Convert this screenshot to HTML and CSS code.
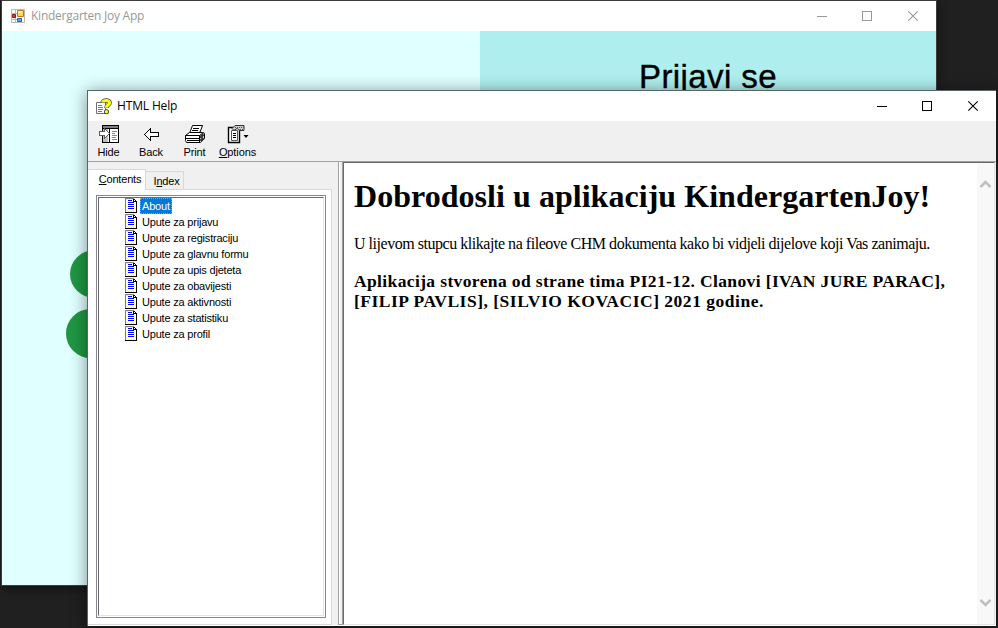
FILE: index.html
```html
<!DOCTYPE html>
<html lang="hr">
<head>
<meta charset="utf-8">
<title>HTML Help</title>
<link rel="stylesheet" href="styles.css">
</head>
<body>
<svg class="defs" width="0" height="0" aria-hidden="true">
  <symbol id="page" viewBox="0 0 12 15">
    <rect x="1" y="1" width="10" height="13" fill="#fff"/>
    <path fill="#ffff3c" d="M1 1h2v1H1zM4 1h1v1H4zM6 1h2v1H6zM1 3h1v1H1zM2 5h1v1H2zM1 7h1v2H1zM2 9h1v1H2zM1 11h1v1H1zM2 12h2v1H2zM5 13h2v1H5zM8 12h1v2H8zM9 5h1v1H9zM9 7h1v1H9zM9 9h1v2H9z"/>
    <rect width="9" height="1" fill="#808080"/>
    <rect width="1" height="14" fill="#808080"/>
    <path fill="#000" d="M9 1h1v1H9zM8 1h1v2H8zM8 3h3v1H8zM10 2h1v1h-1z"/>
    <rect x="11" y="3" width="1" height="12" fill="#000"/>
    <rect y="14" width="12" height="1" fill="#000"/>
    <g fill="#0000ff">
      <rect x="3" y="2" width="4" height="1"/>
      <rect x="3" y="4" width="6" height="1"/>
      <rect x="3" y="6" width="6" height="1"/>
      <rect x="3" y="8" width="6" height="1"/>
      <rect x="3" y="10" width="6" height="1"/>
    </g>
  </symbol>
  <symbol id="controls" viewBox="0 0 108 12">
    <g fill="none" stroke="currentColor" shape-rendering="crispEdges">
      <path d="M0 6.5h10"/><path d="M45.5 1.5h9v9h-9z"/>
    </g>
    <path fill="none" stroke="currentColor" stroke-width="1.1" d="M91.3 1.300l9.400 9.400M100.700 1.300l-9.400 9.400"/>
  </symbol>
</svg>

<div class="window app">
  <header class="titlebar">
    <svg class="app-icon" width="14" height="14" viewBox="0 0 14 14">
      <path fill="#fff" stroke="#b8b8b8" d="M.5.5h13v13H.5zM.5 4.500h6M4.500 .5v13M.5 10.500h6"/>
      <path fill="#ffd84e" stroke="#b87a12" d="M6.500 1.500h6v6h-6z"/><path fill="#fff0a0" d="M7 2h4v2H7z"/>
      <path fill="#d83c2c" stroke="#8f1616" d="M1.500 5.500h3v3h-3z"/>
      <path fill="#6aa0f0" stroke="#2e5cb8" d="M6.500 9.500h4v3h-4z"/>
    </svg>
    <span class="title">Kindergarten Joy App</span>
    <svg class="controls" width="108" height="12"><use href="#controls"/></svg>
  </header>
  <div class="app-body">
    <div class="welcome">
      <svg class="clover" width="90" height="120" viewBox="0 0 90 120">
        <ellipse cx="29" cy="24" rx="25" ry="24"/><circle cx="24.500" cy="83.500" r="24.500"/>
      </svg>
    </div>
    <div class="login">Prijavi se</div>
  </div>
</div>

<div class="window help">
  <header class="titlebar">
    <svg class="help-icon" width="16" height="17" viewBox="0 0 16 17">
      <path fill="#fff" stroke="#707070" d="M.5 4.500h9v11h-9z"/>
      <path stroke="#777" d="M2 7.500h4M2 9.500h5M2 11.500h5M2 13.500h4"/>
      <path fill="none" stroke="#444" stroke-width="4.600" d="M7 5V3.800Q8 2.500 10 2.500q3.500 0 3.500 2.200 0 1.500-1.500 2.500Q10.500 8 10.500 10"/>
      <circle cx="10.500" cy="13.700" r="2.500" fill="#333"/>
      <path fill="none" stroke="#ff0" stroke-width="3.200" d="M7 4.600V3.800Q8 2.500 10 2.500q3.500 0 3.500 2.200 0 1.500-1.500 2.500Q10.500 8 10.500 9.700"/>
      <circle cx="10.500" cy="13.700" r="1.700" fill="#ff0"/>
    </svg>
    <span class="title">HTML Help</span>
    <svg class="controls" width="108" height="12"><use href="#controls"/></svg>
  </header>

  <nav class="toolbar">
    <div class="tool hide">
      <svg width="22" height="20" viewBox="0 0 22 20" shape-rendering="crispEdges">
        <path fill="#fff" stroke="#000" d="M4.500 .5h16v17h-16z"/>
        <path fill="#808080" d="M5 1h15v2H5z"/><path fill="#c0c0c0" d="M5 4h5v13H5z"/>
        <path stroke="#000" d="M4 3.500h17M11.500 3v15"/>
        <path stroke="#888" d="M14 6.500h5M14 8.500h3M14 10.500h5M14 12.500h4M14 14.500h5"/>
        <path fill="#fff" stroke="#606060" d="M1.500 6.500h5v-3l5 5-5 5v-3h-5z"/>
      </svg><span>Hide</span>
    </div>
    <div class="tool back">
      <svg width="22" height="20" viewBox="0 0 22 20"><path fill="#fff" stroke="#000" d="M4.500 9.500l6-6v4h8v4h-8v4z" shape-rendering="crispEdges"/></svg><span>Back</span>
    </div>
    <div class="tool print">
      <svg width="22" height="20" viewBox="0 0 22 20">
        <path fill="#fff" stroke="#000" d="M5.500 8.500l3-8h10l-3 8"/>
        <path fill="#fff" stroke="#000" d="M1.500 10.500l4-3h13l2 1v5l-4 4H2.500l-1-2z"/>
        <path fill="none" stroke="#000" d="M1.500 10.500h14l4-3M2 13.500h13.500l5-4M3 15.500h12M15.500 10.500v7M9 3.500h6M8 5.500h6"/>
        <path stroke="#333" stroke-width="2.500" d="M16.500 12l3-2.500M16.500 16l3-3"/>
      </svg><span>Print</span>
    </div>
    <div class="tool options">
      <svg width="22" height="20" viewBox="0 0 22 20">
        <path fill="#fff" stroke="#000" stroke-width="1.400" d="M1.500 2.500h11v15h-11z"/><path fill="#fff" stroke="#555" d="M4.500 5.500h6v10h-6z"/>
        <path stroke="#000" d="M6 8.500h3M6 10.500h3M6 12.500h3"/>
        <path fill="#ccc" stroke="#333" d="M5 3.500l3-3h9v5h-4l-3-2-3 2z"/>
        <path stroke="#555" stroke-dasharray="1 1" d="M8 2.500h9M11 4.500h6"/>
        <path d="M16.500 10h5L19 13z"/>
      </svg><span><u>O</u>ptions</span>
    </div>
  </nav>

  <div class="panes">
    <aside class="side">
      <div class="tabs">
        <div class="tab active"><u>C</u>ontents</div>
        <div class="tab"><span>I<u>n</u>dex</span></div>
      </div>
      <div class="tab-page">
        <div class="tree-frame">
          <ul class="tree">
            <li><svg width="12" height="15"><use href="#page"/></svg><span class="selected">About</span></li>
            <li><svg width="12" height="15"><use href="#page"/></svg><span>Upute za prijavu</span></li>
            <li><svg width="12" height="15"><use href="#page"/></svg><span>Upute za registraciju</span></li>
            <li><svg width="12" height="15"><use href="#page"/></svg><span>Upute za glavnu formu</span></li>
            <li><svg width="12" height="15"><use href="#page"/></svg><span>Upute za upis djeteta</span></li>
            <li><svg width="12" height="15"><use href="#page"/></svg><span>Upute za obavijesti</span></li>
            <li><svg width="12" height="15"><use href="#page"/></svg><span>Upute za aktivnosti</span></li>
            <li><svg width="12" height="15"><use href="#page"/></svg><span>Upute za statistiku</span></li>
            <li><svg width="12" height="15"><use href="#page"/></svg><span>Upute za profil</span></li>
          </ul>
        </div>
      </div>
    </aside>
    <div class="splitter"></div>
    <main class="document">
      <article>
        <h1>Dobrodosli u aplikaciju KindergartenJoy!</h1>
        <p>U lijevom stupcu klikajte na fileove CHM dokumenta kako bi vidjeli dijelove koji Vas zanimaju.</p>
        <h3><span class="line-a">Aplikacija stvorena od strane tima PI21-12. Clanovi [IVAN JURE PARAC],</span><br><span class="line-b">[FILIP PAVLIS], [SILVIO KOVACIC] 2021 godine.</span></h3>
      </article>
      <div class="scrollbar">
        <svg width="13" height="10" viewBox="0 0 13 10"><path d="M1.500 8l5-5 5 5"/></svg>
        <svg width="13" height="10" viewBox="0 0 13 10"><path d="M1.500 2l5 5 5-5"/></svg>
      </div>
    </main>
  </div>
</div>
</body>
</html>
```

FILE: styles.css
```css
* { box-sizing: border-box; }
body {
  margin: 0;
  width: 998px;
  height: 628px;
  position: relative;
  overflow: hidden;
  background: #202020;
  font: 11px/13px "Liberation Sans", sans-serif;
  color: #000;
}
.defs { position: absolute; }
.window { position: absolute; display: flex; flex-direction: column; }
.titlebar {
  height: 30px;
  flex: none;
  display: flex;
  align-items: center;
  background: #fff;
  font: 12px/16px "Open Sans", sans-serif;
}
.title { white-space: nowrap; }
.controls { margin-left: auto; }

.app {
  left: 1px;
  top: 0;
  width: 936px;
  height: 586px;
  border: 1px solid #3c3c3c;
  box-shadow: 0 3px 9px rgba(0, 0, 0, .45);
}
.app .titlebar { padding: 0 11px 0 9px; color: #999; }
.app .title { margin-left: 6px; letter-spacing: -.25px; }
.app-body { flex: 1; display: flex; }
.welcome { width: 478px; background: #e0ffff; padding: 219px 0 0 64px; }
.clover { display: block; fill: #1f9742; }
.login {
  flex: 1;
  background: #afeeee;
  padding-top: 26px;
  text-align: center;
  font-size: 33px;
  line-height: 40px;
  letter-spacing: .4px;
  -webkit-text-stroke: .4px #000;
}

.help {
  left: 87px;
  top: 90px;
  width: 909px;
  height: 536px;
  border: solid #596666;
  border-width: 1px 0 0 1px;
  background: #fff;
  box-shadow: 0 2px 16px rgba(0, 0, 0, .45);
}
.help .titlebar { padding: 0 11px 0 8px; }
.help .title { margin-left: 5px; letter-spacing: -.15px; }

.toolbar {
  height: 41px;
  flex: none;
  display: flex;
  background: #f0f0f0;
  border-bottom: 1px solid #a0a0a0;
  padding-top: 4px;
}
.tool {
  width: 43px;
  display: flex;
  flex-direction: column;
  align-items: center;
  gap: 1px;
  letter-spacing: -.1px;
}
.tool.hide { width: 41px; }
.tool.back { width: 44px; }
.tool svg { display: block; }

.panes { flex: 1; display: flex; min-height: 0; background: #f0f0f0; border-bottom: 1px solid #fff; }
.side { width: 244px; display: flex; flex-direction: column; padding-top: 7px; }
.tabs { display: flex; height: 21px; align-items: flex-end; margin-bottom: -1px; }
.tab {
  width: 38px;
  height: 19px;
  padding: 3px 0 0 4px;
  text-align: center;
  letter-spacing: -.2px;
  border: solid #d9d9d9;
  border-width: 1px 1px 0 0;
}
.tab.active {
  width: 58px;
  height: 21px;
  padding: 3px 0 0 7px;
  background: #fff;
  position: relative;
}
.tab-page {
  flex: 1;
  background: #fff;
  border: solid #d9d9d9;
  border-width: 1px 1px 1px 0;
  padding: 5px 5px 6px 8px;
}
.tree-frame { height: 100%; border: 1px solid #828790; padding: 1px; }
.tree {
  height: 100%;
  margin: 0;
  padding: 0 0 0 26px;
  list-style: none;
  border: 1px solid;
  border-color: #696969 #e3e3e3 #e3e3e3 #696969;
}
.tree li { height: 16px; display: flex; align-items: flex-start; gap: 3px; }
.tree span { padding: 2px 2px 1px; height: 16px; white-space: nowrap; letter-spacing: -.2px; }
.tree .selected { background: #0078d7; color: #fff; outline: 1px dotted #ff8728; outline-offset: -1px; }
.splitter {
  width: 11px;
  padding-left: 6px;
  display: flex;
}
.splitter::before {
  content: "";
  width: 4px;
  border: solid #a0a0a0;
  border-width: 0 0 1px 1px;
  background: linear-gradient(90deg, #fff 1px, #f0f0f0 1px);
}
.document {
  flex: 1;
  display: flex;
  background: #fff;
  border: 1px solid;
  border-color: #696969 #e3e3e3 #e3e3e3 #696969;
  margin-right: 1px;
  box-shadow: -1px 0 #a0a0a0;
  font-family: "Liberation Serif", serif;
}
article { flex: 1; min-width: 0; padding: 15px 0 0 10px; white-space: nowrap; }
h1, h3, p { margin: 0; }
h1 { font-size: 32px; line-height: 37px; letter-spacing: .04px; }
p { margin-top: 19px; font-size: 16px; line-height: 19px; letter-spacing: -.465px; }
h3 { margin-top: 18px; font-size: 17.500px; line-height: 20px; }
.line-a { letter-spacing: .37px; }
.line-b { letter-spacing: .51px; }
.scrollbar {
  width: 17px;
  padding: 16px 0;
  display: flex;
  flex-direction: column;
  justify-content: space-between;
  align-items: center;
  background: #f8f8f8;
}
.scrollbar path { fill: none; stroke: #bfbfbf; stroke-width: 2.500; }
```
